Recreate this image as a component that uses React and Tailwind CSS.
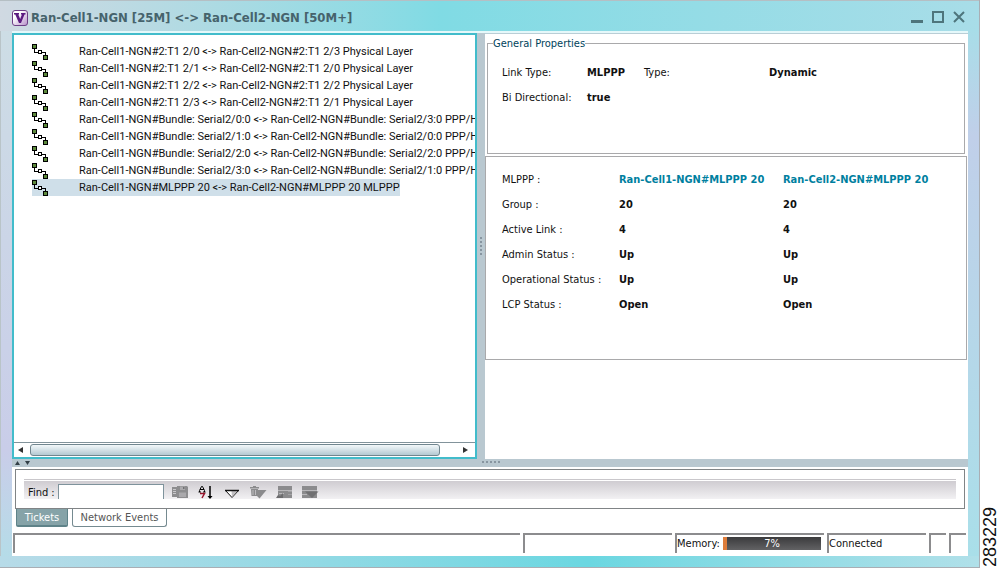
import { useState } from "react";

const links = [
  "Ran-Cell1-NGN#2:T1 2/0 <-> Ran-Cell2-NGN#2:T1 2/3 Physical Layer",
  "Ran-Cell1-NGN#2:T1 2/1 <-> Ran-Cell2-NGN#2:T1 2/0 Physical Layer",
  "Ran-Cell1-NGN#2:T1 2/2 <-> Ran-Cell2-NGN#2:T1 2/2 Physical Layer",
  "Ran-Cell1-NGN#2:T1 2/3 <-> Ran-Cell2-NGN#2:T1 2/1 Physical Layer",
  "Ran-Cell1-NGN#Bundle: Serial2/0:0 <-> Ran-Cell2-NGN#Bundle: Serial2/3:0 PPP/H",
  "Ran-Cell1-NGN#Bundle: Serial2/1:0 <-> Ran-Cell2-NGN#Bundle: Serial2/0:0 PPP/H",
  "Ran-Cell1-NGN#Bundle: Serial2/2:0 <-> Ran-Cell2-NGN#Bundle: Serial2/2:0 PPP/H",
  "Ran-Cell1-NGN#Bundle: Serial2/3:0 <-> Ran-Cell2-NGN#Bundle: Serial2/1:0 PPP/H",
  "Ran-Cell1-NGN#MLPPP 20 <-> Ran-Cell2-NGN#MLPPP 20 MLPPP",
];

const details = [
  ["Group :", "20", "20"],
  ["Active Link :", "4", "4"],
  ["Admin Status :", "Up", "Up"],
  ["Operational Status :", "Up", "Up"],
  ["LCP Status :", "Open", "Open"],
];

function LinkIcon() {
  return (
    <svg width="16" height="16" viewBox="0 0 16 16" className="shrink-0" shapeRendering="crispEdges">
      <path d="M2.5 5v3.5H6M9 8.5h4.500V11" fill="none" stroke="#000" />
      <rect x="0.5" y="0.5" width="4" height="4" fill="#5d8a3c" stroke="#000" />
      <rect x="6.5" y="6.5" width="3" height="3" fill="#fff" stroke="#000" />
      <rect x="11.5" y="11.5" width="4" height="4" fill="#5d8a3c" stroke="#000" />
    </svg>
  );
}

function AppIcon() {
  return (
    <svg width="16" height="16" viewBox="0 0 16 16">
      <defs>
        <linearGradient id="v" x1="0" y1="0" x2="1" y2="1">
          <stop offset="0.3" stopColor="#fff" />
          <stop offset="1" stopColor="#b58cc8" />
        </linearGradient>
      </defs>
      <rect x="0.5" y="0.5" width="15" height="15" rx="2.5" fill="url(#v)" stroke="#6d3f86" />
      <path d="M2 3h5v1.500H6.300L8.200 9l1.700-4.500H9V3h4.500v1.500h-1L9 13H7L3.300 4.500H2z" fill="#5b1a80" />
    </svg>
  );
}

function ToolIcon({ name }) {
  return (
    <svg width="17" height="14" viewBox="0 0 17 14">
      {name === "export" && (
        <g fill="#8d8d8f">
          <path d="M0 2h6v10H0z" />
          <path d="M5 1h10l1 1v11H5z" />
          <path d="M1 4.500h3M1 6.500h3M1 8.500h3" stroke="#c9c8cb" />
          <path d="M8 1.500h5V5H8zM7 7.500h7V12H7z" fill="#aaa9ac" />
          <path d="M11 2h1.500v2H11z" fill="#707072" />
        </g>
      )}
      {name === "sort" && (
        <g fill="none">
          <path d="M1.500 7V5.500L3.500 1.500h1L6.500 5.500V7M2 4.500h4M0.500 7h2.500M5 7h2.500" stroke="#000" />
          <path d="M2 8.500h4.500L4 13" stroke="#98122a" strokeWidth="1.500" />
          <path d="M12 1v12" stroke="#000" strokeWidth="1.500" />
          <path d="M9.500 11h5L12 14z" fill="#000" />
        </g>
      )}
      {name === "filter" && (
        <g>
          <path d="M1.500 5.500h13L8 12.500z" fill="#fff" stroke="#111" />
          <path d="M7.500 6h6L8 12z" fill="#c3c1c4" />
          <path d="M1 5.500h14" stroke="#111" strokeWidth="1.500" />
        </g>
      )}
      {name === "clear" && (
        <g fill="#8b8b8d">
          <path d="M0 2h3V1h3v1h3v1.500H0zM1 4h7l-.5 7h-6z" />
          <path d="M3 5v5M5.500 5v5" stroke="#bdbcbf" />
          <path d="M6 5h10.500L9.500 13.500 6 10z" />
        </g>
      )}
      {name === "showAll" && (
        <g fill="#8b8b8d">
          <path d="M2 1h14v12H2z" />
          <path d="M2 5.500h14M3 8.500h5" stroke="#b9b8bb" />
          <path d="M12 6.500h4M12 9.500h4" stroke="#a3a2a5" />
          <path d="M0 13l2-3 2 1 3-3v5z" fill="#6c6c6e" />
        </g>
      )}
      {name === "showFiltered" && (
        <g fill="#8b8b8d">
          <path d="M0 1h15v12H0z" />
          <path d="M0 5.500h15M0 9.500h5" stroke="#b9b8bb" />
          <path d="M3 6.500h13.500L10 13z" fill="#707072" />
        </g>
      )}
    </svg>
  );
}

function Grip({ vertical }) {
  return (
    <div className={vertical ? "flex flex-col gap-[2px]" : "flex gap-[2px]"}>
      {[0, 1, 2, 3, 4].map((i) => (
        <span key={i} className="size-[2px] bg-[#8795a0]" />
      ))}
    </div>
  );
}

function TitleBar() {
  return (
    <header className="flex h-[31px] items-center border-t border-[#b5bfc4] bg-linear-to-r from-[#d0d9e2] via-[#80dbe4] via-45% to-[#a8dde8] pt-[3px] pr-[14px] pl-3">
      <AppIcon />
      <h1 className="ml-[3px] flex-1 text-[13px] leading-4 font-bold whitespace-nowrap text-[#46636c]">
        Ran-Cell1-NGN [25M] &lt;-&gt; Ran-Cell2-NGN [50M+]
      </h1>
      <div className="-mt-[2px] flex gap-[9px]">
        <button aria-label="Minimize">
          <svg width="12" height="12" viewBox="0 0 12 12">
            <path d="M0 10.500h12" stroke="#4e757c" strokeWidth="3" />
          </svg>
        </button>
        <button aria-label="Maximize">
          <svg width="12" height="12" viewBox="0 0 12 12">
            <path d="M1 1h10v10H1z" fill="none" stroke="#4e757c" strokeWidth="2" />
          </svg>
        </button>
        <button aria-label="Close">
          <svg width="12" height="12" viewBox="0 0 12 12">
            <path d="M1 1l10 10M11 1L1 11" stroke="#4e757c" strokeWidth="2" />
          </svg>
        </button>
      </div>
    </header>
  );
}

function LinkTree({ selected, onSelect }) {
  return (
    <section className="flex min-w-0 flex-[461] flex-col border-2 border-[#42bccb] bg-white">
      <ul className="flex-1 overflow-hidden pt-2 pl-[18px] font-[Roboto,sans-serif]">
        {links.map((link, i) => (
          <li key={link} className="flex h-[17px]">
            <button
              onClick={() => onSelect(i)}
              className={`flex h-[17px] shrink-0 items-center gap-[31px] whitespace-nowrap ${i === selected ? "bg-[#cfdfe9]" : ""}`}
            >
              <LinkIcon />
              {link}
            </button>
          </li>
        ))}
      </ul>
      <div className="flex h-[15px] items-center border-t border-[#82939b] px-1">
        <button aria-label="Scroll left" className="w-[12px]">
          <svg width="5" height="6" viewBox="0 0 5 6">
            <path d="M5 0v6L0 3z" fill="#333" />
          </svg>
        </button>
        <div className="h-[12px] flex-1 rounded-[3px] border border-[#71868f] bg-linear-to-b from-[#f3f8fa] to-[#b4c9d2]" />
        <button aria-label="Scroll right" className="ml-[23px] w-[8px]">
          <svg width="5" height="6" viewBox="0 0 5 6">
            <path d="M0 0v6l5-3z" fill="#333" />
          </svg>
        </button>
      </div>
    </section>
  );
}

function Properties() {
  return (
    <section className="min-w-0 flex-[483] border-t border-[#b9ced6] bg-white pt-[3px]">
      <fieldset className="mr-[3px] ml-[2px] h-[117px] border border-[#a9a9ab] px-[14px]">
        <legend className="-ml-[9px] leading-[13px] text-[#00435c]">General Properties</legend>
        <dl className="mt-[10px] grid grid-cols-[85px_57px_125px_1fr] leading-[25px]">
          <dt>Link Type:</dt>
          <dd className="font-bold">MLPPP</dd>
          <dt>Type:</dt>
          <dd className="font-bold">Dynamic</dd>
          <dt>Bi Directional:</dt>
          <dd className="font-bold">true</dd>
        </dl>
      </fieldset>
      <div className="mt-[2px] mr-px h-[204px] border border-[#a9a9ab] px-4 pt-[10px]">
        <table className="w-full table-fixed text-left leading-[25px]">
          <colgroup>
            <col className="w-[117px]" />
            <col className="w-[164px]" />
            <col />
          </colgroup>
          <thead>
            <tr>
              <th className="p-0 font-normal">MLPPP :</th>
              <th className="p-0 whitespace-nowrap">
                <a href="#cell1" className="text-[#007f9f]">Ran-Cell1-NGN#MLPPP 20</a>
              </th>
              <th className="p-0 whitespace-nowrap">
                <a href="#cell2" className="text-[#007f9f]">Ran-Cell2-NGN#MLPPP 20</a>
              </th>
            </tr>
          </thead>
          <tbody>
            {details.map(([label, a, z]) => (
              <tr key={label}>
                <th className="p-0 font-normal whitespace-nowrap">{label}</th>
                <td className="p-0 font-bold">{a}</td>
                <td className="p-0 font-bold">{z}</td>
              </tr>
            ))}
          </tbody>
        </table>
      </div>
    </section>
  );
}

function TicketPane() {
  return (
    <section className="px-[3px] pt-[2px]">
      <div className="h-[40px] border border-[#808486] pt-[9px] pr-2 pl-2">
        <div className="border-t border-[#c9c7cb] pt-px">
          <div className="flex h-[18px] items-end bg-linear-to-b from-[#cfccd1] to-[#f2f1f3] pl-1">
            <label htmlFor="find" className="w-[30px] whitespace-nowrap">Find :</label>
            <input id="find" className="h-[15px] w-[106px] border border-b-0 border-[#7e939c] bg-white px-1 outline-none" />
            <div className="ml-2 flex gap-[9px]">
              {["export", "sort", "filter", "clear", "showAll", "showFiltered"].map((name) => (
                <button key={name} aria-label={name}>
                  <ToolIcon name={name} />
                </button>
              ))}
            </div>
          </div>
        </div>
      </div>
      <div className="flex gap-1 pl-px">
        <button className="h-[18px] w-[52px] rounded-b-[2px] border border-t-0 border-b-2 border-[#5f8389] bg-[#86a3a8] text-white">
          Tickets
        </button>
        <button className="h-[18px] w-[95px] rounded-b-[3px] border border-t-0 border-[#758a90] bg-white whitespace-nowrap text-[#555]">
          Network Events
        </button>
      </div>
    </section>
  );
}

function StatusBar() {
  const memory = 7;
  const cell = "flex h-5 items-center border-t-2 border-l-2 border-[#8c8c8e] pb-[2px] whitespace-nowrap";
  return (
    <footer className="mt-[6px] mb-[3px] flex gap-[3px] pr-[2px] pl-px">
      <div className={`${cell} flex-1`} />
      <div className={`${cell} w-[149px]`} />
      <div className={`${cell} w-[149px]`}>
        <span className="w-[46px]">Memory:</span>
        <div
          role="progressbar"
          aria-label="Memory"
          aria-valuenow={memory}
          className="relative h-[13px] w-[98px] bg-linear-to-b from-[#3b3b3d] to-[#626264]"
        >
          <div className="h-full bg-[#dd7d3c]" style={{ width: `${memory - 3}%` }} />
          <span className="absolute inset-0 text-center leading-[13px] text-white">{memory}%</span>
        </div>
      </div>
      <div className={`${cell} w-[99px]`}>Connected</div>
      <div className={`${cell} w-[17px]`} />
      <div className={`${cell} w-[17px]`} />
    </footer>
  );
}

export default function App() {
  const [selected, setSelected] = useState(8);

  return (
    <div className="flex min-h-screen bg-white font-['DejaVu_Sans_Condensed','DejaVu_Sans',sans-serif] text-[11px] leading-[13px] text-[#111]">
      <div className="flex min-w-0 flex-1 flex-col border-r border-b border-[#a9aeb4]">
        <TitleBar />
        <div className="flex flex-1">
          <div className="w-3 border-l border-[#b9c4c8] bg-linear-to-b from-[#cddde5] via-[#c9cde9] via-80% to-[#b5dce8]" />
          <main className="flex min-w-0 flex-1 flex-col border-t-2 border-[#e5f8fa] bg-white">
            <div className="flex flex-1">
              <LinkTree selected={selected} onSelect={setSelected} />
              <div className="flex w-2 items-center justify-center bg-[#b9c8d0]">
                <Grip vertical />
              </div>
              <Properties />
            </div>
            <div className="flex h-2 bg-[#b9c8d0] pt-[2px] pl-[3px]">
              <svg width="15" height="4" viewBox="0 0 15 4">
                <path d="M0 4h5L2.500 0zM10 0h5L12.500 4z" fill="#333f46" />
              </svg>
              <div className="flex flex-1 justify-center pr-4">
                <Grip />
              </div>
            </div>
            <TicketPane />
            <StatusBar />
          </main>
          <div className="w-[11px] bg-linear-to-b from-[#a8dde8] via-[#c0cfe9] via-20% to-[#a9dfe9]" />
        </div>
        <div className="h-[11px] bg-linear-to-r from-[#b7dbe8] via-[#6ad7e1] via-60% to-[#b0e0e9]" />
      </div>
      <aside className="flex w-5 items-end justify-center pb-px">
        <span className="rotate-180 font-['Liberation_Sans',sans-serif] text-[18px] leading-5 [writing-mode:vertical-rl]">
          283229
        </span>
      </aside>
    </div>
  );
}
